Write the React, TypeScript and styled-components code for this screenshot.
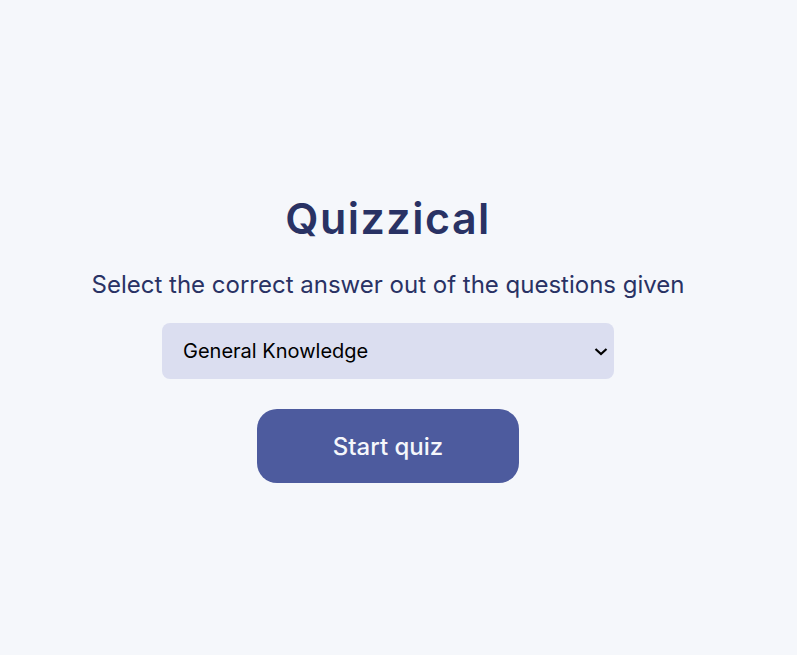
import styled, { createGlobalStyle } from "styled-components";

const GlobalStyle = createGlobalStyle`
  * {
    box-sizing: border-box;
  }

  body {
    margin: 0;
    background: #f5f7fb;
    font-family: Inter, "Noto Sans", sans-serif;
  }
`;

export default function App() {
  return (
    <>
      <GlobalStyle />
      <Main>
        <Title>Quizzical</Title>
        <Subtitle>Select the correct answer out of the questions given</Subtitle>
        <SelectWrap>
          <CategorySelect defaultValue="9">
            <option value="9">General Knowledge</option>
            <option value="17">Science &amp; Nature</option>
            <option value="21">Sports</option>
            <option value="23">History</option>
          </CategorySelect>
          <Chevron viewBox="0 0 14 8" aria-hidden="true">
            <path d="M1.5 1.5 7 6.5l5.5-5" />
          </Chevron>
        </SelectWrap>
        <StartButton type="button">Start quiz</StartButton>
      </Main>
    </>
  );
}

const Main = styled.main`
  min-height: 100vh;
  display: flex;
  flex-direction: column;
  align-items: center;
  justify-content: center;
  padding: 20px 21px 0 0;
`;

const Title = styled.h1`
  margin: 0;
  font-size: 43px;
  line-height: 52px;
  font-weight: 600;
  letter-spacing: 1.5px;
  color: #293264;
`;

const Subtitle = styled.p`
  margin: 26px 0 0;
  font-size: 24px;
  line-height: 30px;
  font-weight: 400;
  color: #293264;
`;

const SelectWrap = styled.div`
  position: relative;
  margin-top: 23px;
  width: 452px;
  height: 56px;
`;

const CategorySelect = styled.select`
  appearance: none;
  width: 100%;
  height: 100%;
  padding: 0 40px 0 21px;
  border: none;
  border-radius: 8px;
  background: #dbdef0;
  font-family: Inter, "Noto Sans", sans-serif;
  font-size: 20px;
  color: #000;
  outline: none;
`;

const Chevron = styled.svg`
  position: absolute;
  right: 6px;
  top: 24px;
  width: 14px;
  height: 9px;
  fill: none;
  stroke: #000;
  stroke-width: 2.2;
  pointer-events: none;
`;

const StartButton = styled.button`
  margin-top: 30px;
  width: 262px;
  height: 74px;
  border: none;
  border-radius: 20px;
  background: #4d5b9e;
  color: #f5f7fb;
  font-family: Inter, "Noto Sans", sans-serif;
  font-size: 24px;
  font-weight: 500;
  cursor: pointer;
`;
